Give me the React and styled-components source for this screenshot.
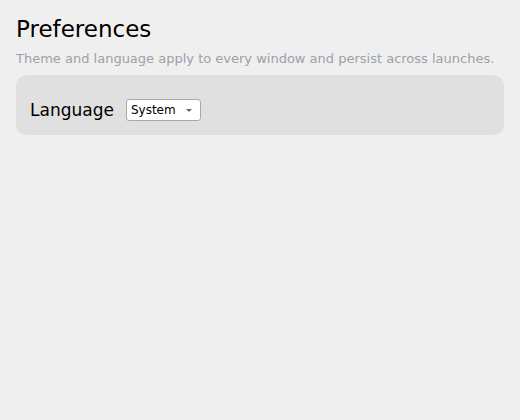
import React from "react";
import styled, { createGlobalStyle } from "styled-components";

const Global = createGlobalStyle`
  html, body { margin: 0; padding: 0; background: #efefef; }
  body { font-family: "DejaVu Sans", Verdana, sans-serif; color: #000; }
`;

const Page = styled.div`
  padding: 15px 16px;
  display: flex;
  flex-direction: column;
`;

const Title = styled.h1`
  margin: 0;
  font-size: 23px;
  font-weight: 400;
  line-height: 28px;
`;

const Subtitle = styled.p`
  margin: 8px 0 0;
  font-size: 13px;
  line-height: 15px;
  color: #9ba1aa;
`;

const Panel = styled.section`
  margin-top: 9px;
  background: #e0e0e0;
  border-radius: 10px;
  padding: 24px 14px 14px;
  display: flex;
  align-items: center;
  gap: 12px;
`;

const Label = styled.label`
  font-size: 17px;
  line-height: 22px;
`;

const SelectWrap = styled.div`
  position: relative;
  display: inline-flex;
`;

const Select = styled.select`
  appearance: none;
  -webkit-appearance: none;
  width: 75px;
  height: 22px;
  box-sizing: border-box;
  margin: 0;
  padding: 0 18px 0 4px;
  font-family: "DejaVu Sans", Verdana, sans-serif;
  font-size: 12px;
  color: #000;
  background: #fff;
  border: 1px solid #a8a8a8;
  border-radius: 3px;
  outline: none;
`;

const Arrow = styled.span`
  position: absolute;
  right: 9px;
  top: 9.5px;
  width: 0;
  height: 0;
  border-left: 3.5px solid transparent;
  border-right: 3.5px solid transparent;
  border-top: 3.5px solid #666;
  pointer-events: none;
`;

export default function App() {
  return (
    <>
      <Global />
      <Page>
        <Title>Preferences</Title>
        <Subtitle>
          Theme and language apply to every window and persist across launches.
        </Subtitle>
        <Panel>
          <Label htmlFor="lang">Language</Label>
          <SelectWrap>
            <Select id="lang" defaultValue="system">
              <option value="system">System</option>
              <option value="en">English</option>
            </Select>
            <Arrow />
          </SelectWrap>
        </Panel>
      </Page>
    </>
  );
}
